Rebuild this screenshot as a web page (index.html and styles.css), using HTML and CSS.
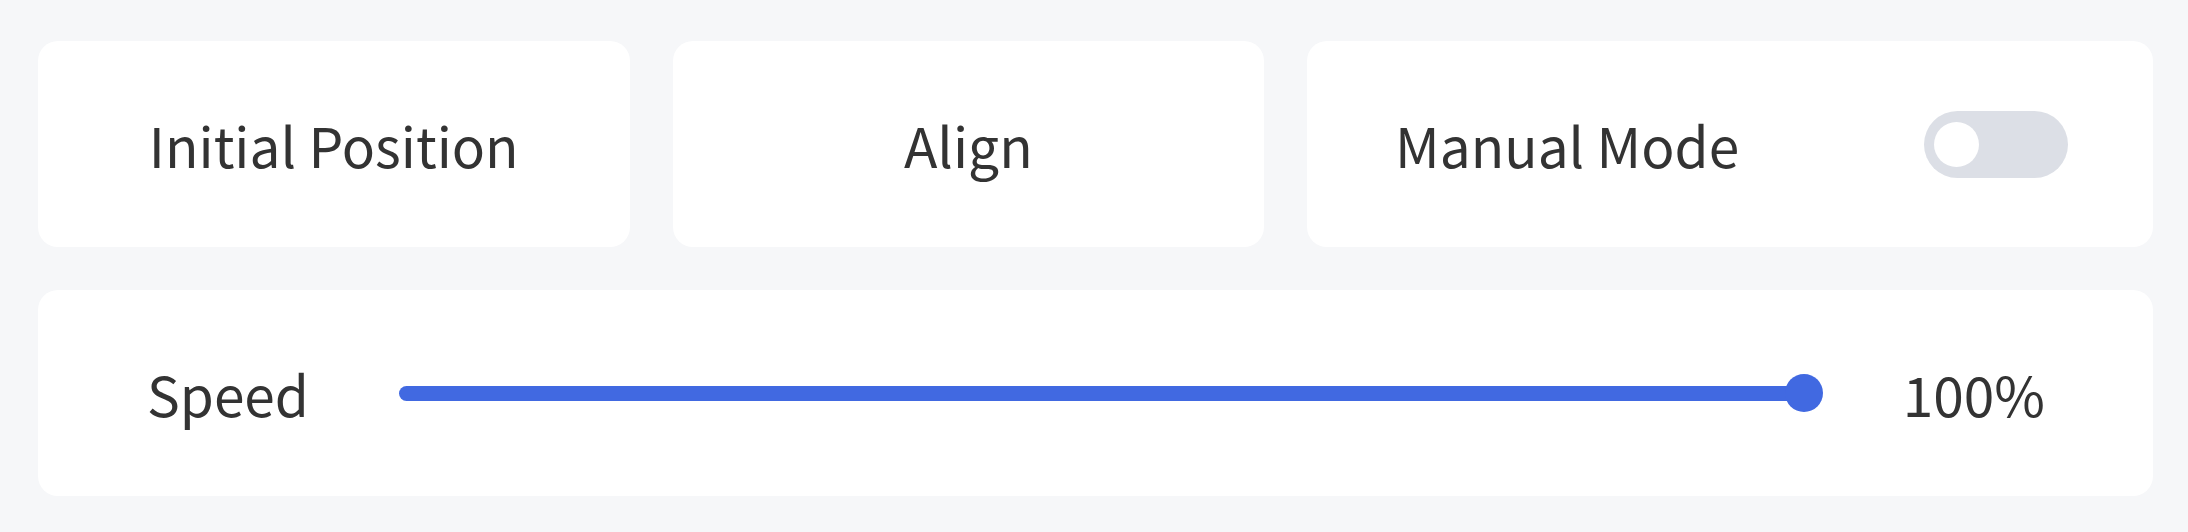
FILE: index.html
```html
<!DOCTYPE html>
<html lang="en">
<head>
<meta charset="utf-8">
<title>Controls</title>
<link rel="stylesheet" href="styles.css">
</head>
<body>
<div class="page">
  <div class="row">
    <div class="card card-center">Initial Position</div>
    <div class="card card-center">Align</div>
    <div class="card card-between">
      <span>Manual Mode</span>
      <div class="toggle"><div class="toggle-knob"></div></div>
    </div>
  </div>
  <div class="card card-slider">
    <span class="label">Speed</span>
    <div class="slider">
      <div class="slider-track"><div class="slider-fill" style="width:100%"></div></div>
      <div class="slider-thumb"></div>
    </div>
    <span class="value">100%</span>
  </div>
</div>
</body>
</html>
```

FILE: styles.css
```css
* { box-sizing: border-box; }
html, body {
  margin: 0;
  padding: 0;
  background: #f6f7f9;
}
body {
  font-family: "Noto Sans CJK SC", "Noto Sans", sans-serif;
  color: #333333;
  font-size: 55px;
}
.page {
  padding: 41px 35px 36px 38px;
  display: flex;
  flex-direction: column;
  gap: 43px;
}
.row {
  display: grid;
  grid-template-columns: 1fr 1fr 1.43fr;
  gap: 43px;
}
.card {
  background: #ffffff;
  border-radius: 20px;
  height: 206px;
  display: flex;
  align-items: center;
  line-height: 1;
}
.card-center {
  justify-content: center;
}
.card-between {
  justify-content: space-between;
  padding: 0 85px 0 88px;
}
.toggle {
  width: 144px;
  height: 67px;
  border-radius: 34px;
  background: #dcdfe6;
  padding: 11px 10px;
}
.toggle-knob {
  width: 45px;
  height: 45px;
  border-radius: 50%;
  background: #ffffff;
}
.card-slider {
  padding: 0 108px 0 109px;
}
.label {
  margin-right: 90px;
}
.slider {
  flex: 1;
  position: relative;
  height: 38px;
  display: flex;
  align-items: center;
  margin-right: 80px;
}
.slider-track {
  flex: 1;
  margin-right: 19px;
  height: 15px;
  border-radius: 8px;
  background: #e4e7ed;
  overflow: hidden;
}
.slider-fill {
  height: 100%;
  background: #4169e1;
}
.slider-thumb {
  position: absolute;
  right: 0;
  top: 0;
  width: 38px;
  height: 38px;
  border-radius: 50%;
  background: #4169e1;
}
```
